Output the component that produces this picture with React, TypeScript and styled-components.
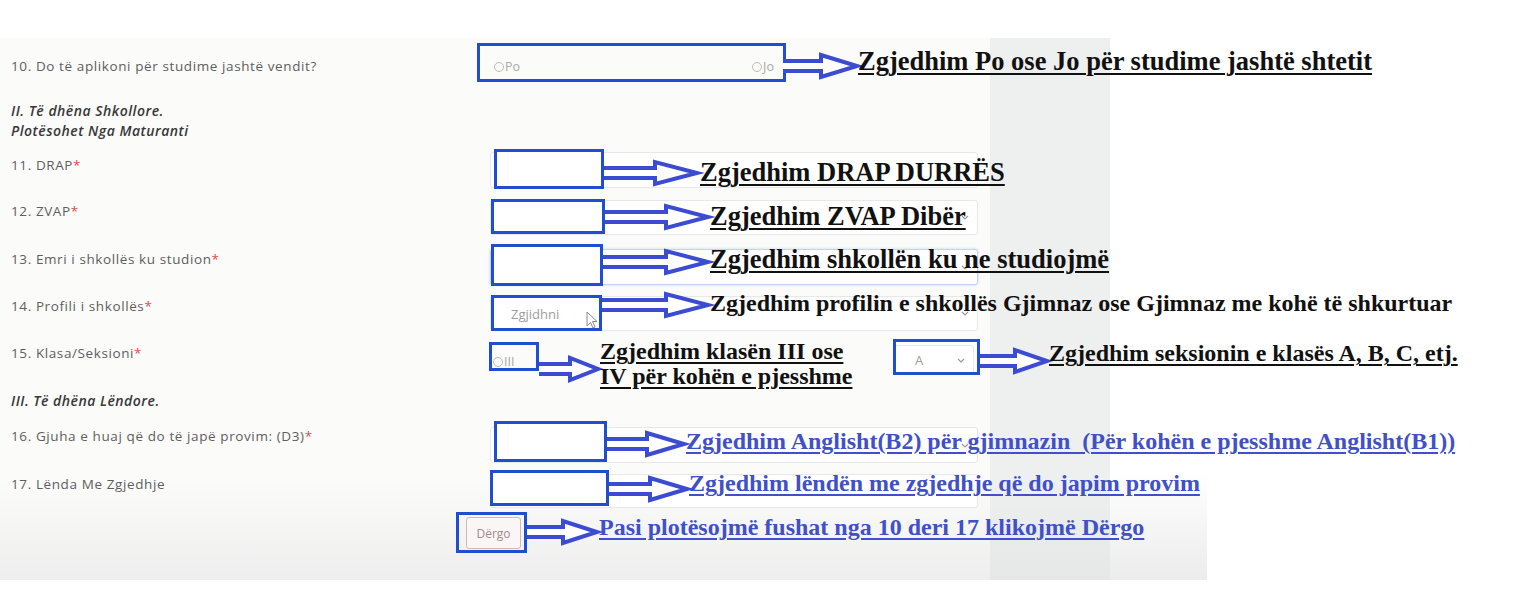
import React from "react";
import styled, { createGlobalStyle } from "styled-components";

const GlobalStyle = createGlobalStyle`
  html, body { margin: 0; padding: 0; background: #ffffff; }
  #root { width: 1520px; height: 615px; }
`;

const Page = styled.div`
  position: relative;
  width: 1520px;
  height: 615px;
  overflow: hidden;
  background: #ffffff;
  padding-top: 38px;
  box-sizing: border-box;
`;

const Panel = styled.div`
  width: 1207px;
  height: 542px;
  display: grid;
  grid-template-columns: 990px 120px 1fr;
  background: linear-gradient(to bottom, #fbfbfa 0%, #fbfbfa 82%, #eeeeee 100%);
`;

const Form = styled.div`
  display: flex;
  flex-direction: column;
  font-family: "Open Sans", "Liberation Sans", sans-serif;
`;

const Gutter = styled.div`
  background: linear-gradient(to bottom, #eeefef 0%, #eeefef 82%, #e6e7e7 100%);
`;

const RightFill = styled.div`
  background: linear-gradient(to bottom, #ffffff 0%, #ffffff 80%, #ececec 100%);
`;

const Row = styled.div<{ $h: number }>`
  display: grid;
  grid-template-columns: 490px 488px;
  height: ${(p) => p.$h}px;
`;

const Label = styled.div<{ $top: number }>`
  padding: ${(p) => p.$top}px 0 0 11px;
  font-size: 13.5px;
  letter-spacing: 0.6px;
  line-height: 18px;
  color: #5e5e5e;
  white-space: nowrap;
`;

const Req = styled.span`
  color: #e04b4b;
`;

const SectionTitle = styled.div<{ $top: number; $h: number }>`
  box-sizing: border-box;
  padding: ${(p) => p.$top}px 0 0 11px;
  height: ${(p) => p.$h}px;
  font-size: 14px;
  letter-spacing: 0.5px;
  line-height: 20px;
  font-style: italic;
  font-weight: 600;
  color: #383838;
`;

const Field = styled.div<{ $top: number }>`
  padding-top: ${(p) => p.$top}px;
`;

const Select = styled.div<{ $h?: number; $focus?: boolean }>`
  height: ${(p) => p.$h ?? 35}px;
  box-sizing: border-box;
  border: 1px solid ${(p) => (p.$focus ? "#c2d3f2" : "#e8e8e8")};
  box-shadow: ${(p) => (p.$focus ? "0 0 3px rgba(120,160,230,0.4)" : "none")};
  border-radius: 3px;
  background: #ffffff;
  display: flex;
  align-items: center;
  justify-content: space-between;
  padding: 0 8px 0 20px;
  font-size: 13px;
  color: #9c9c9c;
`;

const Chevron = () => (
  <svg width="8" height="5" viewBox="0 0 8 5">
    <path d="M1 1 L4 4 L7 1" fill="none" stroke="#9a9a9a" strokeWidth="1.2" />
  </svg>
);

const RadioGroup = styled.div`
  display: flex;
  justify-content: space-between;
  width: 280px;
  margin-left: 4px;
`;

const Radio = styled.span`
  display: inline-flex;
  align-items: center;
  font-size: 12.5px;
  line-height: 18px;
  color: #a9a9a9;
  &::before {
    content: "";
    width: 8px;
    height: 8px;
    border: 1px solid #bdbdbd;
    border-radius: 50%;
    margin-right: 1px;
  }
`;

const ClassField = styled.div`
  display: grid;
  grid-template-columns: 404px 80px;
  align-items: center;
  padding-top: 10px;
`;

const RadioSlot = styled.div`
  padding-left: 3px;
  padding-top: 2px;
`;

const ButtonRow = styled.div`
  padding: 5px 0 0 466px;
`;

const SubmitButton = styled.button`
  width: 55px;
  height: 32px;
  border: 1px solid #d6b6b6;
  border-radius: 3px;
  background: #fbf6f6;
  color: #9d8b8b;
  font-family: "Open Sans", "Liberation Sans", sans-serif;
  font-size: 12px;
  padding: 0;
`;

/* ---------- annotation overlay ---------- */

const BlueBox = styled.div<{ $x: number; $y: number; $w: number; $h: number; $mask?: boolean }>`
  position: absolute;
  left: ${(p) => p.$x}px;
  top: ${(p) => p.$y}px;
  width: ${(p) => p.$w}px;
  height: ${(p) => p.$h}px;
  box-sizing: border-box;
  border: 3px solid #1f4fd0;
  background: ${(p) => (p.$mask ? "#ffffff" : "transparent")};
`;

const Note = styled.div<{ $x: number; $y: number; $size: number; $blue?: boolean; $plain?: boolean }>`
  position: absolute;
  left: ${(p) => p.$x}px;
  top: ${(p) => p.$y}px;
  font-family: "Liberation Serif", "Times New Roman", serif;
  font-weight: 700;
  font-size: ${(p) => p.$size}px;
  line-height: 25px;
  color: ${(p) => (p.$blue ? "#3f50c8" : "#111111")};
  white-space: pre;
  text-decoration: ${(p) => (p.$plain ? "none" : "underline")};
  text-decoration-thickness: 2px;
  text-underline-offset: 3px;
`;

const ArrowSvg = styled.svg<{ $x: number; $y: number }>`
  position: absolute;
  left: ${(p) => p.$x}px;
  top: ${(p) => p.$y - 15}px;
  overflow: visible;
`;

function Arrow({ x1, x2, y }: { x1: number; x2: number; y: number }) {
  const w = x2 - x1;
  const hl = Math.min(42, Math.round(w * 0.48));
  const b = w - hl;
  const d = `M0,10 L${b},10 L${b},4 L${w},15 L${b},26 L${b},20 L0,20`;
  return (
    <ArrowSvg $x={x1} $y={y} width={w} height={30} viewBox={`0 0 ${w} 30`}>
      <path d={d} fill="#ffffff" stroke="#3b4bd2" strokeWidth={4} strokeLinejoin="miter" />
    </ArrowSvg>
  );
}

const CursorSvg = styled.svg`
  position: absolute;
  left: 586px;
  top: 311px;
`;

const boxes = [
  { x: 477, y: 43, w: 309, h: 39 },
  { x: 494, y: 149, w: 110, h: 40, mask: true },
  { x: 491, y: 199, w: 114, h: 35, mask: true },
  { x: 491, y: 244, w: 112, h: 42, mask: true },
  { x: 491, y: 295, w: 111, h: 36 },
  { x: 489, y: 342, w: 50, h: 29 },
  { x: 893, y: 339, w: 87, h: 36 },
  { x: 494, y: 421, w: 113, h: 41, mask: true },
  { x: 490, y: 470, w: 119, h: 36, mask: true },
  { x: 456, y: 512, w: 71, h: 41 },
];

const arrows = [
  { x1: 783, x2: 857, y: 66 },
  { x1: 604, x2: 697, y: 173 },
  { x1: 605, x2: 708, y: 217 },
  { x1: 603, x2: 708, y: 262 },
  { x1: 602, x2: 708, y: 305 },
  { x1: 539, x2: 598, y: 369 },
  { x1: 980, x2: 1047, y: 361 },
  { x1: 607, x2: 684, y: 444 },
  { x1: 609, x2: 687, y: 489 },
  { x1: 527, x2: 597, y: 532 },
];

const notes = [
  { x: 858, y: 49, size: 26.5, text: "Zgjedhim Po ose Jo për studime jashtë shtetit" },
  { x: 700, y: 160, size: 26.5, text: "Zgjedhim DRAP DURRËS" },
  { x: 710, y: 204, size: 26.5, text: "Zgjedhim ZVAP Dibër" },
  { x: 710, y: 247, size: 26.5, text: "Zgjedhim shkollën ku ne studiojmë" },
  { x: 710, y: 291, size: 24, plain: true, text: "Zgjedhim profilin e shkollës Gjimnaz ose Gjimnaz me kohë të shkurtuar" },
  { x: 600, y: 339, size: 24, text: "Zgjedhim klasën III ose" },
  { x: 600, y: 364, size: 24, text: "IV për kohën e pjesshme" },
  { x: 1049, y: 341, size: 24, text: "Zgjedhim seksionin e klasës A, B, C, etj." },
  { x: 686, y: 429, size: 24, blue: true, text: "Zgjedhim Anglisht(B2) për gjimnazin  (Për kohën e pjesshme Anglisht(B1))" },
  { x: 689, y: 471, size: 24, blue: true, text: "Zgjedhim lëndën me zgjedhje që do japim provim" },
  { x: 599, y: 515, size: 24, blue: true, text: "Pasi plotësojmë fushat nga 10 deri 17 klikojmë Dërgo" },
];

export default function App() {
  return (
    <>
      <GlobalStyle />
      <Page>
        <Panel>
          <Form>
            <Row $h={56}>
              <Label $top={19}>10. Do të aplikoni për studime jashtë vendit?</Label>
              <Field $top={20}>
                <RadioGroup>
                  <Radio>Po</Radio>
                  <Radio>Jo</Radio>
                </RadioGroup>
              </Field>
            </Row>
            <SectionTitle $top={7} $h={48}>
              II. Të dhëna Shkollore.
              <br />
              Plotësohet Nga Maturanti
            </SectionTitle>
            <Row $h={48}>
              <Label $top={14}>
                11. DRAP<Req>*</Req>
              </Label>
              <Field $top={10}>
                <Select $h={36} />
              </Field>
            </Row>
            <Row $h={46}>
              <Label $top={12}>
                12. ZVAP<Req>*</Req>
              </Label>
              <Field $top={10}>
                <Select>
                  <span />
                  <Chevron />
                </Select>
              </Field>
            </Row>
            <Row $h={50}>
              <Label $top={14}>
                13. Emri i shkollës ku studion<Req>*</Req>
              </Label>
              <Field $top={13}>
                <Select $h={36} $focus>
                  <span />
                  <Chevron />
                </Select>
              </Field>
            </Row>
            <Row $h={46}>
              <Label $top={11}>
                14. Profili i shkollës<Req>*</Req>
              </Label>
              <Field $top={10}>
                <Select>
                  <span>Zgjidhni</span>
                  <Chevron />
                </Select>
              </Field>
            </Row>
            <Row $h={46}>
              <Label $top={12}>
                15. Klasa/Seksioni<Req>*</Req>
              </Label>
              <ClassField>
                <RadioSlot>
                  <Radio>III</Radio>
                </RadioSlot>
                <Select $h={30}>
                  <span>A</span>
                  <Chevron />
                </Select>
              </ClassField>
            </Row>
            <SectionTitle $top={13} $h={46}>
              III. Të dhëna Lëndore.
            </SectionTitle>
            <Row $h={48}>
              <Label $top={3}>
                16. Gjuha e huaj që do të japë provim: (D3)<Req>*</Req>
              </Label>
              <Field $top={3}>
                <Select $h={36}>
                  <span />
                  <Chevron />
                </Select>
              </Field>
            </Row>
            <Row $h={40}>
              <Label $top={3}>17. Lënda Me Zgjedhje</Label>
              <Field $top={2}>
                <Select $h={34} />
              </Field>
            </Row>
            <ButtonRow>
              <SubmitButton type="button">Dërgo</SubmitButton>
            </ButtonRow>
          </Form>
          <Gutter />
          <RightFill />
        </Panel>

        {boxes.map((b, i) => (
          <BlueBox key={i} $x={b.x} $y={b.y} $w={b.w} $h={b.h} $mask={b.mask} />
        ))}
        {arrows.map((a, i) => (
          <Arrow key={i} x1={a.x1} x2={a.x2} y={a.y} />
        ))}
        {notes.map((n, i) => (
          <Note key={i} $x={n.x} $y={n.y} $size={n.size} $blue={n.blue} $plain={n.plain}>
            {n.text}
          </Note>
        ))}
        <CursorSvg width="12" height="18" viewBox="0 0 12 18">
          <path d="M1 1 L1 15 L4.5 11.5 L7 17 L9 16 L6.5 10.5 L11 10.5 Z" fill="#ffffff" stroke="#8a8a8a" strokeWidth="1" />
        </CursorSvg>
      </Page>
    </>
  );
}
